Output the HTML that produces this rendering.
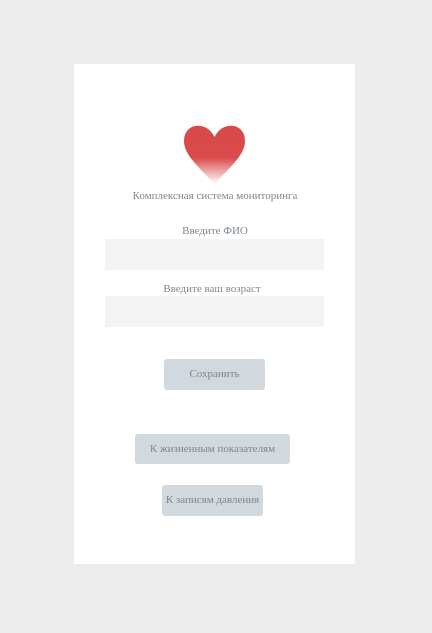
<!DOCTYPE html>
<html><head><meta charset="utf-8"><style>
body{margin:0;width:432px;height:633px;background:#ececec;font-family:"Liberation Serif","DejaVu Serif",serif;position:relative;overflow:hidden}
.card{position:absolute;left:74px;top:64px;width:281px;height:500px;background:#fff}
.t{position:absolute;left:0;width:430px;text-align:center;font-size:11px;color:#7d8790}
.in{position:absolute;left:105px;width:219px;height:31px;background:#f3f3f3}
.b{position:absolute;background:#d1d8de;border-radius:3px;font-size:11px;color:#7d8790;text-align:center;line-height:30px}
</style></head><body>
<div class="card"></div>
<svg style="position:absolute;left:183px;top:125px" width="63" height="60" viewBox="0 0 63 60">
<defs><linearGradient id="g" x1="0" y1="0" x2="0" y2="1"><stop offset="0" stop-color="#d84a4a"/><stop offset="0.55" stop-color="#d94b4b"/><stop offset="1" stop-color="#fff"/></linearGradient></defs>
<path d="M31.5 12C27 3 20 0.5 14 0.8C6 1.2 1 7.5 1 16C1 30 16 42 31.5 59C47 42 62 30 62 16C62 7.5 57 1.2 49 0.8C43 0.5 36 3 31.5 12Z" fill="url(#g)"/>
</svg>
<div class="t" style="top:190px">Комплексная система мониторинга</div>
<div class="t" style="top:225px">Введите ФИО</div>
<div class="in" style="top:239px"></div>
<div class="t" style="top:283px;left:-3px">Введите ваш возраст</div>
<div class="in" style="top:296px"></div>
<div class="b" style="left:164px;top:359px;width:101px;height:31px">Сохранить</div>
<div class="b" style="left:135px;top:434px;width:155px;height:30px">К жизненным показателям</div>
<div class="b" style="left:162px;top:485px;width:101px;height:31px">К записям давления</div>
</body></html>
